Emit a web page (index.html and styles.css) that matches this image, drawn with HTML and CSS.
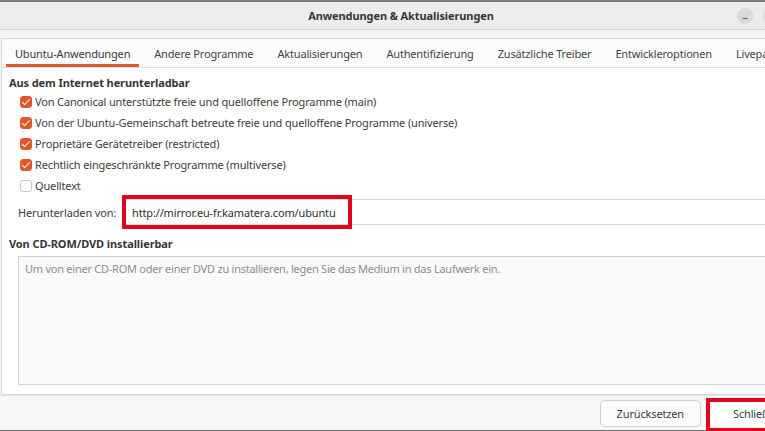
FILE: index.html
```html
<!DOCTYPE html>
<html lang="de">
<head>
<meta charset="utf-8">
<title>Anwendungen &amp; Aktualisierungen</title>
<link rel="stylesheet" href="styles.css">
</head>
<body>
<div class="window">
  <header class="titlebar">
    <span class="title">Anwendungen &amp; Aktualisierungen</span>
    <div class="controls">
      <span class="ctl">
        <svg width="8" height="8" viewBox="0 0 8 8"><path d="M1.5 6.5h5" stroke="#6b6b6b" stroke-width="1.2"/></svg>
      </span>
      <span class="ctl">
        <svg width="8" height="8" viewBox="0 0 8 8"><path d="M1.5 1.5l5 5M6.5 1.5l-5 5" stroke="#6b6b6b" stroke-width="1.2"/></svg>
      </span>
    </div>
  </header>

  <main class="body">
    <div class="notebook">
      <nav class="tabs">
        <span class="tab active">Ubuntu-Anwendungen</span>
        <span class="tab">Andere Programme</span>
        <span class="tab">Aktualisierungen</span>
        <span class="tab">Authentifizierung</span>
        <span class="tab">Zusätzliche Treiber</span>
        <span class="tab">Entwickleroptionen</span>
        <span class="tab">Livepatch</span>
      </nav>

      <section class="page">
        <h2 class="heading">Aus dem Internet herunterladbar</h2>
        <ul class="checks">
          <li class="check on"><span class="box"></span>Von Canonical unterstützte freie und quelloffene Programme (main)</li>
          <li class="check on"><span class="box"></span>Von der Ubuntu-Gemeinschaft betreute freie und quelloffene Programme (universe)</li>
          <li class="check on"><span class="box"></span>Proprietäre Gerätetreiber (restricted)</li>
          <li class="check on"><span class="box"></span>Rechtlich eingeschränkte Programme (multiverse)</li>
          <li class="check"><span class="box"></span>Quelltext</li>
        </ul>

        <div class="mirror">
          <span class="mirror-label">Herunterladen von:</span>
          <div class="combo">
            <span class="combo-text">http://mirror.eu-fr.kamatera.com/ubuntu</span>
            <span class="highlight"></span>
          </div>
        </div>

        <h2 class="heading cd">Von CD-ROM/DVD installierbar</h2>
        <div class="cdrom">Um von einer CD-ROM oder einer DVD zu installieren, legen Sie das Medium in das Laufwerk ein.</div>
      </section>
    </div>
  </main>

  <footer class="actions">
    <button class="btn">Zurücksetzen</button>
    <button class="btn marked">Schließen<span class="highlight"></span></button>
  </footer>
</div>
</body>
</html>
```

FILE: styles.css
```css
* { box-sizing: border-box; }

html, body {
  margin: 0;
  padding: 0;
  width: 765px;
  height: 431px;
  overflow: hidden;
  background: #f6f6f6;
}

body {
  font-family: "Noto Sans", "Open Sans", sans-serif;
  font-size: 11px;
  letter-spacing: -0.15px;
  color: #3c3c3c;
}

.window {
  width: 802px;
  height: 431px;
  display: flex;
  flex-direction: column;
  background: #f6f6f6;
  border-bottom: 1px solid #727272;
}

/* header bar */
.titlebar {
  height: 30px;
  flex: none;
  display: flex;
  align-items: center;
  justify-content: center;
  position: relative;
  background: #ececec;
  border-top: 2px solid #7a7a7a;
  border-bottom: 1px solid #d4d4d4;
}

.title {
  font-weight: 700;
  color: #353535;
  letter-spacing: -0.1px;
}

.controls {
  position: absolute;
  right: 23px;
  top: 6px;
  display: flex;
  gap: 10px;
}

.ctl {
  width: 16px;
  height: 16px;
  border-radius: 50%;
  background: #dadada;
  display: flex;
  align-items: center;
  justify-content: center;
}

/* main area */
.body {
  flex: 1;
  padding: 8px 0 0 1px;
  display: flex;
}

.notebook {
  flex: 1;
  display: flex;
  flex-direction: column;
  border: 1px solid #d8d8d8;
  border-right: none;
  background: #ffffff;
}

.tabs {
  height: 29px;
  flex: none;
  display: flex;
  padding-left: 1px;
  background: #fbfbfb;
  border-bottom: 1px solid #dedede;
  white-space: nowrap;
}

.tab {
  margin: 0 3px;
  padding: 3px 9px 0;
  display: flex;
  align-items: center;
  color: #444;
  letter-spacing: -0.17px;
  border-bottom: 3px solid transparent;
}

.tab.active {
  border-bottom-color: #e0582a;
  color: #3a3a3a;
}

.page {
  flex: 1;
  display: flex;
  flex-direction: column;
  padding: 7px 0 9px 7px;
}

.heading {
  margin: 0;
  font-size: 11px;
  line-height: 16px;
  font-weight: 700;
  color: #363636;
  letter-spacing: -0.1px;
}

.checks {
  list-style: none;
  margin: 0;
  padding: 0 0 0 11px;
}

.check {
  height: 21px;
  display: flex;
  align-items: center;
  gap: 3px;
}

.box {
  width: 12px;
  height: 12px;
  border-radius: 3px;
  border: 1px solid #c4c4c4;
  background: #fff;
  flex: none;
  position: relative;
}

.check.on .box {
  border-color: #e0582a;
  background: #e0582a;
}

.check.on .box::after {
  content: "";
  position: absolute;
  left: 3px;
  top: 0px;
  width: 3px;
  height: 7px;
  border: solid #fff;
  border-width: 0 1.6px 1.6px 0;
  transform: rotate(45deg);
}

/* mirror selector */
.mirror {
  display: flex;
  align-items: center;
  margin-top: 3px;
  padding-left: 9px;
}

.mirror-label {
  width: 106px;
  flex: none;
}

.combo {
  flex: 1;
  height: 26px;
  position: relative;
  display: flex;
  align-items: center;
  padding-left: 8px;
  border-top: 1px solid #d6d6d6;
  border-bottom: 1px solid #d6d6d6;
  background: #fff;
  color: #2f2f2f;
}

.highlight {
  position: absolute;
  border: 4px solid #e0051a;
  pointer-events: none;
}

.combo .highlight {
  left: -2px;
  top: -5px;
  width: 230px;
  height: 34px;
}

.heading.cd {
  margin-top: 11px;
}

.cdrom {
  flex: 1;
  margin: 4px 0 0 9px;
  padding: 4px 6px;
  background: #fafafa;
  border: 1px solid #d2d2d2;
  border-right: none;
  color: #8d8d8d;
  letter-spacing: -0.25px;
}

/* action buttons */
.actions {
  height: 35px;
  flex: none;
  display: flex;
  align-items: flex-start;
  justify-content: flex-end;
  gap: 7px;
  padding: 4px 7px 0 0;
  background: #f6f6f6;
  border-top: 1px solid #e4e4e4;
}

.btn {
  font: inherit;
  letter-spacing: inherit;
  color: #3c3c3c;
  height: 27px;
  padding: 0 16px;
  min-width: 96px;
  background: #fcfcfc;
  border: 1px solid #cfcfcf;
  border-radius: 5px;
  position: relative;
}

.btn.marked {
  width: 87px;
  min-width: 0;
  text-align: left;
  padding-left: 24px;
  border-color: transparent;
  background: #fff;
}

.btn .highlight {
  left: -3px;
  top: -3px;
  right: -3px;
  bottom: -6px;
}
```
